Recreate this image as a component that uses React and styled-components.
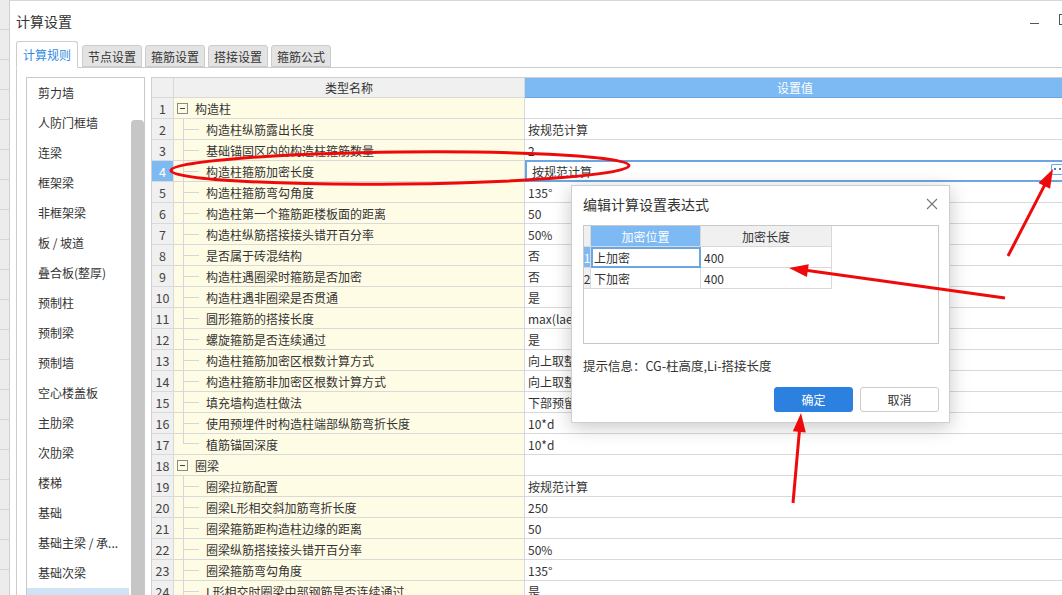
import React from 'react';
import styled, { createGlobalStyle } from 'styled-components';

const FONT = '"Noto Sans CJK SC", "Noto Sans", "Liberation Sans", sans-serif';

const SIDE_ITEMS = [
  '剪力墙', '人防门框墙', '连梁', '框架梁', '非框架梁', '板 / 坡道', '叠合板(整厚)',
  '预制柱', '预制梁', '预制墙', '空心楼盖板', '主肋梁', '次肋梁', '楼梯', '基础',
  '基础主梁 / 承...', '基础次梁', '砌体结构',
];

const ROWS = [
  { name: '构造柱', group: true },
  { name: '构造柱纵筋露出长度', value: '按规范计算' },
  { name: '基础锚固区内的构造柱箍筋数量', value: '2' },
  { name: '构造柱箍筋加密长度', value: '按规范计算', editing: true },
  { name: '构造柱箍筋弯勾角度', value: '135°' },
  { name: '构造柱第一个箍筋距楼板面的距离', value: '50' },
  { name: '构造柱纵筋搭接接头错开百分率', value: '50%' },
  { name: '是否属于砖混结构', value: '否' },
  { name: '构造柱遇圈梁时箍筋是否加密', value: '否' },
  { name: '构造柱遇非圈梁是否贯通', value: '是' },
  { name: '圆形箍筋的搭接长度', value: 'max(lae,300)' },
  { name: '螺旋箍筋是否连续通过', value: '是' },
  { name: '构造柱箍筋加密区根数计算方式', value: '向上取整+1' },
  { name: '构造柱箍筋非加密区根数计算方式', value: '向上取整-1' },
  { name: '填充墙构造柱做法', value: '下部预留钢筋,上部植筋' },
  { name: '使用预埋件时构造柱端部纵筋弯折长度', value: '10*d' },
  { name: '植筋锚固深度', value: '10*d', last: true },
  { name: '圈梁', group: true },
  { name: '圈梁拉筋配置', value: '按规范计算' },
  { name: '圈梁L形相交斜加筋弯折长度', value: '250' },
  { name: '圈梁箍筋距构造柱边缘的距离', value: '50' },
  { name: '圈梁纵筋搭接接头错开百分率', value: '50%' },
  { name: '圈梁箍筋弯勾角度', value: '135°' },
  { name: 'L形相交时圈梁中部钢筋是否连续通过', value: '是' },
];

const GlobalStyle = createGlobalStyle`
  html, body {
    margin: 0;
    padding: 0;
    width: 1062px;
    height: 595px;
    overflow: hidden;
    background: #fff;
    font-family: ${FONT};
    color: #333;
  }
`;

const Screen = styled.div`
  position: relative;
  display: flex;
  width: 1062px;
  height: 595px;
  overflow: hidden;
`;

const BackStrip = styled.div`
  width: 9px;
  flex-shrink: 0;
  background: repeating-linear-gradient(#ececec 0 29px, #d6d6d6 29px 30px);
  border-right: 1px solid #cfcfcf;
  box-shadow: 1px 0 3px rgba(0, 0, 0, 0.15);
`;

const Window = styled.div`
  flex: 1;
  display: flex;
  flex-direction: column;
  min-width: 0;
  background: #fff;
  border-top: 1px solid #d8d8d8;
  padding-left: 6px;
`;

const TitleBar = styled.div`
  height: 40px;
  display: flex;
  align-items: center;
  flex-shrink: 0;
`;

const Title = styled.div`
  font-size: 14px;
  color: #333;
  flex: 1;
  margin-top: -1px;
`;

const WinControls = styled.div`
  display: flex;
  align-items: center;
  gap: 20px;
  margin-right: -8px;
  margin-top: -3px;
`;

const MinIcon = styled.span`
  width: 9px;
  height: 1px;
  background: #555;
  margin-top: 8px;
`;

const MaxIcon = styled.span`
  width: 9px;
  height: 9px;
  border: 1px solid #555;
`;

const TabBar = styled.div`
  display: flex;
  align-items: flex-end;
  gap: 4px;
  height: 26px;
  flex-shrink: 0;
  position: relative;
  z-index: 1;
`;

const Tab = styled.div`
  height: ${(p) => (p.$active ? '25px' : '20px')};
  padding: 0 ${(p) => (p.$active ? '6px' : '5px')};
  display: flex;
  align-items: center;
  font-size: 12px;
  color: ${(p) => (p.$active ? '#2f8ae5' : '#333')};
  background: ${(p) => (p.$active ? '#fff' : '#e3e3e3')};
  border: 1px solid #cccccc;
  border-bottom: ${(p) => (p.$active ? '1px solid #fff' : '1px solid #ccc')};
  border-radius: 3px 3px 0 0;
  margin-bottom: ${(p) => (p.$active ? '-1px' : '0')};
  box-sizing: content-box;
  margin-right: ${(p) => (p.$active ? '0' : '-1px')};
`;

const Panel = styled.div`
  flex: 1;
  display: flex;
  gap: 6px;
  border-top: 1px solid #cccccc;
  border-left: 1px solid #cccccc;
  padding: 9px 0 0 9px;
  min-height: 0;
`;

const SideList = styled.div`
  width: 117px;
  flex-shrink: 0;
  display: flex;
  border: 1px solid #c9c9c9;
  border-bottom: none;
  align-self: stretch;
`;

const SideItems = styled.div`
  flex: 1;
  display: flex;
  flex-direction: column;
`;

const SideItem = styled.div`
  height: 30px;
  flex-shrink: 0;
  display: flex;
  align-items: center;
  padding-left: 11px;
  padding-bottom: 2px;
  box-sizing: border-box;
  font-size: 12px;
  color: #333;
  white-space: nowrap;
  overflow: hidden;
  background: ${(p) => (p.$selected ? '#cfe2f6' : 'transparent')};
  margin-right: ${(p) => (p.$selected ? '2px' : '0')};
`;

const ScrollTrack = styled.div`
  width: 13px;
  flex-shrink: 0;
  display: flex;
  justify-content: center;
  padding-top: 42px;
`;

const ScrollThumb = styled.div`
  width: 8px;
  flex: 1;
  background: #c6c6c6;
  border-radius: 4px 4px 0 0;
`;

const Grid = styled.div`
  flex: 1;
  display: flex;
  flex-direction: column;
  border-top: 1px solid #cfcfcf;
  border-left: 1px solid #cfcfcf;
  min-width: 0;
`;

const Row = styled.div`
  display: flex;
  height: ${(p) => (p.$header ? '20px' : '21px')};
  flex-shrink: 0;
`;

const Cell = styled.div`
  box-sizing: border-box;
  height: 100%;
  display: flex;
  align-items: center;
  font-size: 12px;
  border-right: 1px solid #d9d9d9;
  border-bottom: 1px solid #d9d9d9;
  white-space: nowrap;
  overflow: hidden;
`;

const NumCell = styled(Cell)`
  width: 22px;
  flex-shrink: 0;
  justify-content: center;
  color: ${(p) => (p.$active ? '#fff' : '#444')};
  background: ${(p) => (p.$active ? '#7db9f3' : '#f0f0f0')};
  font-size: 12.5px;
`;

const NameCell = styled(Cell)`
  width: 351px;
  flex-shrink: 0;
  background: ${(p) => (p.$header ? '#f0f0f0' : '#fffce6')};
  justify-content: ${(p) => (p.$header ? 'center' : 'flex-start')};
  align-items: ${(p) => (p.$header ? 'center' : 'stretch')};
`;

const ValueCell = styled(Cell)`
  flex: 1;
  padding-left: ${(p) => (p.$editing ? '5px' : '3px')};
  justify-content: ${(p) => (p.$header ? 'center' : 'flex-start')};
  background: ${(p) => (p.$header ? '#7db9f3' : '#fff')};
  color: ${(p) => (p.$header ? '#fff' : '#333')};
  border-right: none;
  border-bottom-color: ${(p) => (p.$header ? '#6aa6e4' : '#d9d9d9')};
  ${(p) =>
    p.$editing &&
    `
    border: 2px solid #6aa6e4;
    border-right: none;
    margin-top: -1px;
    height: 22px;
  `}
`;

const EllipsisBtn = styled.span`
  margin-left: auto;
  width: 11px;
  height: 11px;
  flex-shrink: 0;
  box-sizing: border-box;
  border: 1px solid #6aa6e4;
  border-right: none;
  border-radius: 2px 0 0 2px;
  background:
    radial-gradient(circle, #3b82d6 0 1px, transparent 1.2px) 1px 2px / 4px 4px no-repeat,
    radial-gradient(circle, #3b82d6 0 1px, transparent 1.2px) 6px 2px / 4px 4px no-repeat,
    #fff;
  margin-top: -3px;
`;

const Guide = styled.span`
  width: 15px;
  margin-left: 9px;
  flex-shrink: 0;
  border-left: 1px solid #d6d6d6;
  height: ${(p) => (p.$last ? '50%' : '100%')};
  background: linear-gradient(#d6d6d6, #d6d6d6) no-repeat 0 ${(p) => (p.$last ? '100%' : '50%')} / 100% 1px;
`;

const Label = styled.span`
  display: flex;
  align-items: center;
  padding-left: 7px;
  color: #333;
`;

const ToggleBox = styled.span`
  width: 9px;
  height: 9px;
  margin-left: 3px;
  align-self: center;
  border: 1px solid #8a8a8a;
  flex-shrink: 0;
  display: flex;
  align-items: center;
  justify-content: center;
  &::after {
    content: '';
    width: 5px;
    height: 1px;
    background: #444;
  }
`;

/* dialog (modal window floating over the grid) */
const Dialog = styled.div`
  position: absolute;
  left: 571px;
  top: 185px;
  width: 379px;
  height: 238px;
  box-sizing: border-box;
  background: #fff;
  border: 1px solid #cfcfcf;
  box-shadow: 0 4px 18px rgba(0, 0, 0, 0.22);
  display: flex;
  flex-direction: column;
  padding: 0 10px 0 11px;
  z-index: 5;
`;

const DialogHead = styled.div`
  height: 39px;
  padding-bottom: 4px;
  box-sizing: border-box;
  display: flex;
  align-items: center;
  font-size: 14px;
  color: #333;
  justify-content: space-between;
`;

const CloseIcon = styled.svg`
  width: 12px;
  height: 12px;
  margin-right: 1px;
`;

const DGrid = styled.div`
  height: 119px;
  border: 1px solid #c8c8c8;
  display: flex;
  flex-direction: column;
  box-sizing: border-box;
`;

const DRow = styled.div`
  display: flex;
  height: 21px;
  flex-shrink: 0;
`;

const DCell = styled.div`
  box-sizing: border-box;
  height: 100%;
  display: flex;
  align-items: center;
  font-size: 12px;
  border-right: 1px solid #d9d9d9;
  border-bottom: 1px solid #d9d9d9;
  width: ${(p) => p.$w}px;
  justify-content: ${(p) => (p.$center ? 'center' : 'flex-start')};
  padding-left: ${(p) => (p.$center ? '0' : '3px')};
  background: ${(p) => p.$bg || '#fff'};
  color: ${(p) => (p.$light ? '#fff' : '#333')};
  ${(p) => p.$selected && 'border: 2px solid #6aa6e4; padding-left: 1px;'}
`;

const Hint = styled.div`
  margin-top: 11px;
  height: 21px;
  display: flex;
  align-items: center;
  font-size: 12.5px;
  color: #333;
`;

const ButtonRow = styled.div`
  margin-top: 11px;
  display: flex;
  justify-content: flex-end;
  gap: 7px;
`;

const Button = styled.div`
  width: 79px;
  height: 25px;
  box-sizing: border-box;
  border-radius: 3px;
  display: flex;
  align-items: center;
  justify-content: center;
  font-size: 12px;
  background: ${(p) => (p.$primary ? '#2c80e0' : '#fff')};
  color: ${(p) => (p.$primary ? '#fff' : '#333')};
  border: 1px solid ${(p) => (p.$primary ? '#2c80e0' : '#cccccc')};
`;

const Marks = styled.svg`
  position: absolute;
  left: 0;
  top: 0;
  width: 1062px;
  height: 595px;
  pointer-events: none;
  z-index: 10;
`;

const RED = '#ee0a0a';

function Arrow({ x1, y1, x2, y2 }) {
  const dx = x2 - x1;
  const dy = y2 - y1;
  const len = Math.hypot(dx, dy);
  const ux = dx / len;
  const uy = dy / len;
  const hl = 19;
  const hw = 6.5;
  const bx = x2 - ux * hl;
  const by = y2 - uy * hl;
  const pts = [
    [x2, y2],
    [bx - uy * hw, by + ux * hw],
    [bx + uy * hw, by - ux * hw],
  ];
  return (
    <g>
      <line x1={x1} y1={y1} x2={bx + ux * 2} y2={by + uy * 2} stroke={RED} strokeWidth="3" />
      <polygon points={pts.map((p) => p.join(',')).join(' ')} fill={RED} />
    </g>
  );
}

export default function App() {
  return (
    <>
      <GlobalStyle />
      <Screen>
        <BackStrip />
        <Window>
          <TitleBar>
            <Title>计算设置</Title>
            <WinControls>
              <MinIcon />
              <MaxIcon />
            </WinControls>
          </TitleBar>
          <TabBar>
            <Tab $active>计算规则</Tab>
            <Tab>节点设置</Tab>
            <Tab>箍筋设置</Tab>
            <Tab>搭接设置</Tab>
            <Tab>箍筋公式</Tab>
          </TabBar>
          <Panel>
            <SideList>
              <SideItems>
                {SIDE_ITEMS.map((s, i) => (
                  <SideItem key={s} $selected={i === SIDE_ITEMS.length - 1}>
                    {s}
                  </SideItem>
                ))}
              </SideItems>
              <ScrollTrack>
                <ScrollThumb />
              </ScrollTrack>
            </SideList>
            <Grid>
              <Row $header>
                <NumCell />
                <NameCell $header>类型名称</NameCell>
                <ValueCell $header>设置值</ValueCell>
              </Row>
              {ROWS.map((r, i) => (
                <Row key={i}>
                  <NumCell $active={r.editing}>{i + 1}</NumCell>
                  <NameCell>
                    {r.group ? <ToggleBox /> : <Guide $last={r.last} />}
                    <Label>{r.name}</Label>
                  </NameCell>
                  <ValueCell $editing={r.editing}>
                    {r.value}
                    {r.editing && <EllipsisBtn />}
                  </ValueCell>
                </Row>
              ))}
            </Grid>
          </Panel>
        </Window>

        <Dialog>
          <DialogHead>
            <span>编辑计算设置表达式</span>
            <CloseIcon viewBox="0 0 12 12">
              <path d="M1 1 L11 11 M11 1 L1 11" stroke="#777" strokeWidth="1.1" />
            </CloseIcon>
          </DialogHead>
          <DGrid>
            <DRow>
              <DCell $w={7} $bg="#f0f0f0" />
              <DCell $w={110} $center $bg="#7db9f3" $light>加密位置</DCell>
              <DCell $w={131} $center $bg="#f0f0f0">加密长度</DCell>
            </DRow>
            <DRow>
              <DCell $w={7} $center $bg="#7db9f3" $light>1</DCell>
              <DCell $w={110} $selected>上加密</DCell>
              <DCell $w={131}>400</DCell>
            </DRow>
            <DRow>
              <DCell $w={7} $center $bg="#f0f0f0">2</DCell>
              <DCell $w={110}>下加密</DCell>
              <DCell $w={131}>400</DCell>
            </DRow>
          </DGrid>
          <Hint>提示信息：CG-柱高度,Li-搭接长度</Hint>
          <ButtonRow>
            <Button $primary>确定</Button>
            <Button>取消</Button>
          </ButtonRow>
        </Dialog>

        <Marks viewBox="0 0 1062 595">
          <ellipse cx="400" cy="168" rx="229" ry="16" transform="rotate(-0.6 400 168)" fill="none" stroke={RED} strokeWidth="3" />
          <Arrow x1={1008} y1={256} x2={1053} y2={169} />
          <Arrow x1={1005} y1={298} x2={789} y2={268} />
          <Arrow x1={793} y1={503} x2={801} y2={413} />
        </Marks>
      </Screen>
    </>
  );
}
